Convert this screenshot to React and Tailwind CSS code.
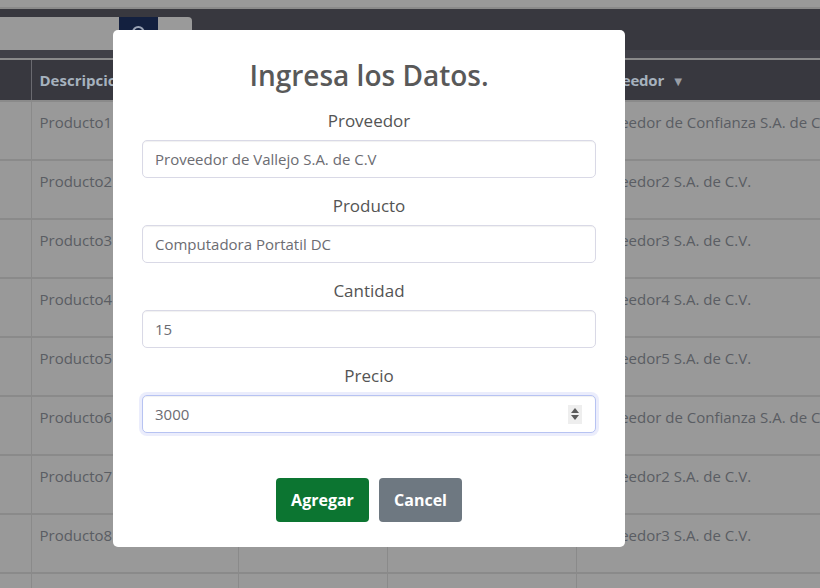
import { Search } from 'lucide-react';

const ROWS = [
  { desc: 'Producto1', prov: 'Proveedor de Confianza S.A. de C.V.' },
  { desc: 'Producto2', prov: 'Proveedor2 S.A. de C.V.' },
  { desc: 'Producto3', prov: 'Proveedor3 S.A. de C.V.' },
  { desc: 'Producto4', prov: 'Proveedor4 S.A. de C.V.' },
  { desc: 'Producto5', prov: 'Proveedor5 S.A. de C.V.' },
  { desc: 'Producto6', prov: 'Proveedor de Confianza S.A. de C.V.' },
  { desc: 'Producto7', prov: 'Proveedor2 S.A. de C.V.' },
  { desc: 'Producto8', prov: 'Proveedor3 S.A. de C.V.' },
  { desc: '', prov: '' },
];

const FONT = "font-['Open_Sans','Noto_Sans',sans-serif]";

function Field({ label, value }) {
  return (
    <div className="flex flex-col items-center">
      <label className="h-6 text-[17px] leading-6 text-[#545454]">{label}</label>
      <input
        readOnly
        defaultValue={value}
        className="mt-[7px] h-[38px] w-full rounded-[5px] border border-[#d9d9e6] bg-white px-3 text-[15px] text-[#6c6c72] shadow-[inset_0_1px_1px_rgba(0,0,0,0.06)] outline-none"
      />
    </div>
  );
}

export default function App() {
  return (
    <div className={`relative h-[588px] w-[820px] overflow-hidden bg-[#999999] ${FONT}`}>
      {/* página de fondo (atenuada) */}
      <div className="h-[7px] bg-[#999999]" />
      <div className="h-[2px] bg-[#8a8a8a]" />
      <div className="flex h-[41px] items-end bg-[#38383f]">
        <div className="h-[33px] w-[119px] bg-[#999999]" />
        <div className="flex h-[33px] w-[39px] items-start justify-center bg-[#13203f] pt-2">
          <Search className="h-4 w-4 text-[#9aa3b5]" strokeWidth={3} />
        </div>
        <div className="h-[33px] w-[34px] rounded-tr-[4px] bg-[#9a9a9a]" />
      </div>
      <div className="h-[8px] bg-[#404047]" />
      <div className="h-[2px] bg-[#8a8a8a]" />

      <table className="w-[820px] table-fixed border-collapse text-left">
        <colgroup>
          <col className="w-[31px]" />
          <col className="w-[207px]" />
          <col className="w-[149px]" />
          <col className="w-[189px]" />
          <col />
        </colgroup>
        <thead>
          <tr className="h-[41px] bg-[#38383f] text-[15px] font-bold text-[#a6b2be]">
            <th className="border-r border-[#6a6a70]" />
            <th className="overflow-hidden whitespace-nowrap border-r border-[#6a6a70] px-2">Descripcion</th>
            <th className="border-r border-[#6a6a70]" />
            <th className="border-r border-[#6a6a70]" />
            <th className="overflow-hidden whitespace-nowrap px-3 tracking-[-0.2px]">
              Proveedor <span className="ml-1 text-[13px] text-[#9a9ea6]">▼</span>
            </th>
          </tr>
        </thead>
        <tbody className="text-[15px] text-[#5a5d63]">
          {ROWS.map((r, i) => (
            <tr key={i} className="h-[59px] border-t-2 border-[#8a8a8a] align-top">
              <td className="border-r border-[#8a8a8a]" />
              <td className="overflow-hidden whitespace-nowrap border-r border-[#8a8a8a] px-2 pt-[9px]">{r.desc}</td>
              <td className="border-r border-[#8a8a8a]" />
              <td className="border-r border-[#8a8a8a]" />
              <td className="overflow-hidden whitespace-nowrap px-3 pt-[9px]">{r.prov}</td>
            </tr>
          ))}
        </tbody>
      </table>

      {/* modal */}
      <div className="absolute left-[113px] top-[30px] flex h-[517px] w-[512px] flex-col rounded-[5px] bg-white px-[29px] pt-[27px]">
        <h2 className="text-center text-[28px] leading-9 font-semibold text-[#595959]">
          Ingresa los Datos.
        </h2>
        <div className="mt-4 flex flex-col gap-4">
          <Field label="Proveedor" value="Proveedor de Vallejo S.A. de C.V" />
          <Field label="Producto" value="Computadora Portatil DC" />
          <Field label="Cantidad" value="15" />
          <div className="flex flex-col items-center">
            <label className="h-6 text-[17px] leading-6 text-[#545454]">Precio</label>
            <div className="mt-[7px] flex h-[38px] w-full items-center rounded-[5px] border border-[#b7c3f2] bg-white pl-3 pr-[13px] shadow-[0_0_0_3px_rgba(110,130,235,0.14),inset_0_1px_1px_rgba(0,0,0,0.06)]">
              <span className="flex-1 text-[15px] text-[#6c6c72]">3000</span>
              <div className="flex h-[19px] w-[14px] flex-col items-center justify-center gap-[2px] bg-[#eeeeee]">
                <svg width="8" height="5" viewBox="0 0 8 5"><path d="M0 5L4 0L8 5Z" fill="#5a5a5a" /></svg>
                <svg width="8" height="5" viewBox="0 0 8 5"><path d="M0 0L4 5L8 0Z" fill="#5a5a5a" /></svg>
              </div>
            </div>
          </div>
        </div>
        <div className="mt-[45px] flex justify-center gap-[10px]">
          <button className="h-[44px] w-[93px] rounded-[4px] bg-[#0c7531] text-[16px] font-bold text-white">
            Agregar
          </button>
          <button className="h-[44px] w-[83px] rounded-[4px] bg-[#6e7881] text-[16px] font-bold text-white">
            Cancel
          </button>
        </div>
      </div>
    </div>
  );
}
